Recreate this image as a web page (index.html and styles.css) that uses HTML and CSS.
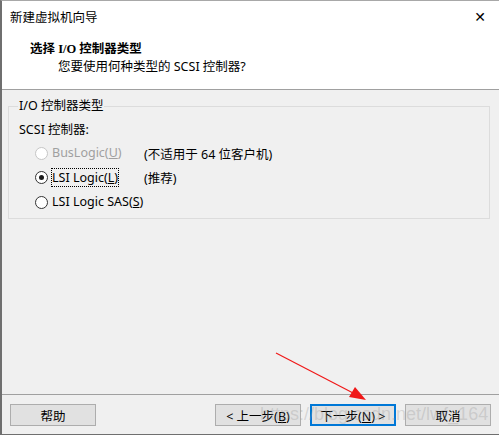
FILE: index.html
```html
<!DOCTYPE html>
<html lang="zh-CN">
<head>
    <meta charset="UTF-8">
    <title>新建虚拟机向导</title>
    <link rel="stylesheet" href="styles.css">
</head>
<body>

    <div class="window">

        <!-- Header Section -->
        <div class="header">
            <div class="caption">
                <span>新建虚拟机向导</span>
                <span class="close">&#x2715;</span>
            </div>
            <h1>选择 I/O 控制器类型</h1>
            <p>您要使用何种类型的 SCSI 控制器?</p>
        </div>

        <!-- Controller Options -->
        <div class="content">
            <fieldset class="group">
                <legend>I/O 控制器类型</legend>
                <div class="group-title">SCSI 控制器:</div>
                <div class="option disabled">
                    <span class="radio"></span>
                    <span class="label"><span>BusLogic(<u>U</u>)</span></span>
                    <span class="note">(不适用于 64 位客户机)</span>
                </div>
                <div class="option">
                    <span class="radio checked"></span>
                    <span class="label"><span class="focus">LSI Logic(<u>L</u>)</span></span>
                    <span class="note">(推荐)</span>
                </div>
                <div class="option">
                    <span class="radio"></span>
                    <span class="label"><span>LSI Logic SAS(<u>S</u>)</span></span>
                </div>
            </fieldset>
        </div>

        <!-- Footer Buttons -->
        <div class="footer">
            <button class="btn">帮助</button>
            <div class="nav-buttons">
                <button class="btn">&lt; 上一步(<u>B</u>)</button>
                <button class="btn default">下一步(<u>N</u>) &gt;</button>
                <button class="btn">取消</button>
            </div>
        </div>

        <!-- Annotation arrow -->
        <svg class="arrow" width="499" height="435" viewBox="0 0 499 435">
            <line x1="276" y1="353" x2="355" y2="394" stroke="#f01818" stroke-width="1.2"/>
            <polygon points="366,400 349,397 355,387" fill="#f01818"/>
        </svg>
        <div class="watermark">https://blog.csdn.net/lwf_164</div>
    </div>

</body>
</html>
```

FILE: styles.css
```css
body {
    margin: 0;
    padding: 0;
    font-family: "Noto Sans", "Noto Sans CJK SC", sans-serif;
    font-size: 12.5px;
    color: #000;
    background-color: #fff;
}
.window {
    position: relative;
    width: 499px;
    height: 435px;
    box-sizing: border-box;
    border-top: 1px solid #a8a8a8;
    border-left: 2px solid #6f6f6f;
    border-bottom: 1px solid #6f6f6f;
    background-color: #f0f0f0;
    display: flex;
    flex-direction: column;
    overflow: hidden;
}
.header {
    background-color: #fff;
    border-bottom: 1px solid #a0a0a0;
    box-sizing: border-box;
    height: 89px;
}
.caption {
    display: flex;
    justify-content: space-between;
    align-items: center;
    padding: 7px 13px 0 8px;
    height: 19px;
    line-height: 19px;
}
.close {
    font-size: 14px;
    font-family: "DejaVu Sans", sans-serif;
}
.header h1 {
    margin: 14px 0 0 28px;
    font-size: 12.5px;
    font-weight: bold;
    line-height: 17px;
    font-family: "Liberation Serif", "Noto Sans CJK SC", serif;
}
.header p {
    margin: 0 0 0 56px;
    line-height: 17px;
}
.content {
    padding: 8px 9px 0 6px;
}
.group {
    margin: 0;
    padding: 7px 10px 3px 10px;
    border: 1px solid #dcdcdc;
}
.group legend {
    padding: 0 1px;
    margin-left: -1px;
    line-height: 16px;
}
.group-title {
    line-height: 17px;
    margin-bottom: 3px;
}
.option {
    display: flex;
    align-items: center;
    height: 24.5px;
    padding-left: 16px;
}
.radio {
    width: 11px;
    height: 11px;
    border: 1px solid #333;
    border-radius: 50%;
    background-color: #fff;
    position: relative;
    margin-right: 4px;
}
.radio.checked::after {
    content: "";
    position: absolute;
    left: 3px;
    top: 3px;
    width: 5px;
    height: 5px;
    border-radius: 50%;
    background-color: #1a1a1a;
}
.disabled .radio {
    border-color: #c6c6c6;
}
.disabled .label {
    color: #a0a0a0;
}
.label {
    width: 88px;
    line-height: 16px;
    white-space: nowrap;
}
.focus {
    outline: 1px dotted #000;
}
.note {
    margin-left: 4px;
}
.footer {
    margin-top: auto;
    border-top: 1px solid #a0a0a0;
    height: 40px;
    display: flex;
    justify-content: space-between;
    align-items: flex-start;
    padding: 9px 8px 0 8px;
    box-sizing: border-box;
}
.nav-buttons {
    display: flex;
    gap: 9px;
}
.btn {
    width: 86px;
    height: 22px;
    background-color: #e1e1e1;
    border: 1px solid #adadad;
    font-family: "Noto Sans", "Noto Sans CJK SC", sans-serif;
    font-size: 12.5px;
    padding: 0;
    color: #000;
}
.btn.default {
    border: 2px solid #0078d7;
}
.arrow {
    position: absolute;
    left: -2px;
    top: -1px;
    pointer-events: none;
}
.watermark {
    position: absolute;
    left: 258px;
    top: 403px;
    font-family: "Liberation Sans", sans-serif;
    font-size: 18px;
    color: rgba(150, 150, 150, 0.3);
    pointer-events: none;
}
```
